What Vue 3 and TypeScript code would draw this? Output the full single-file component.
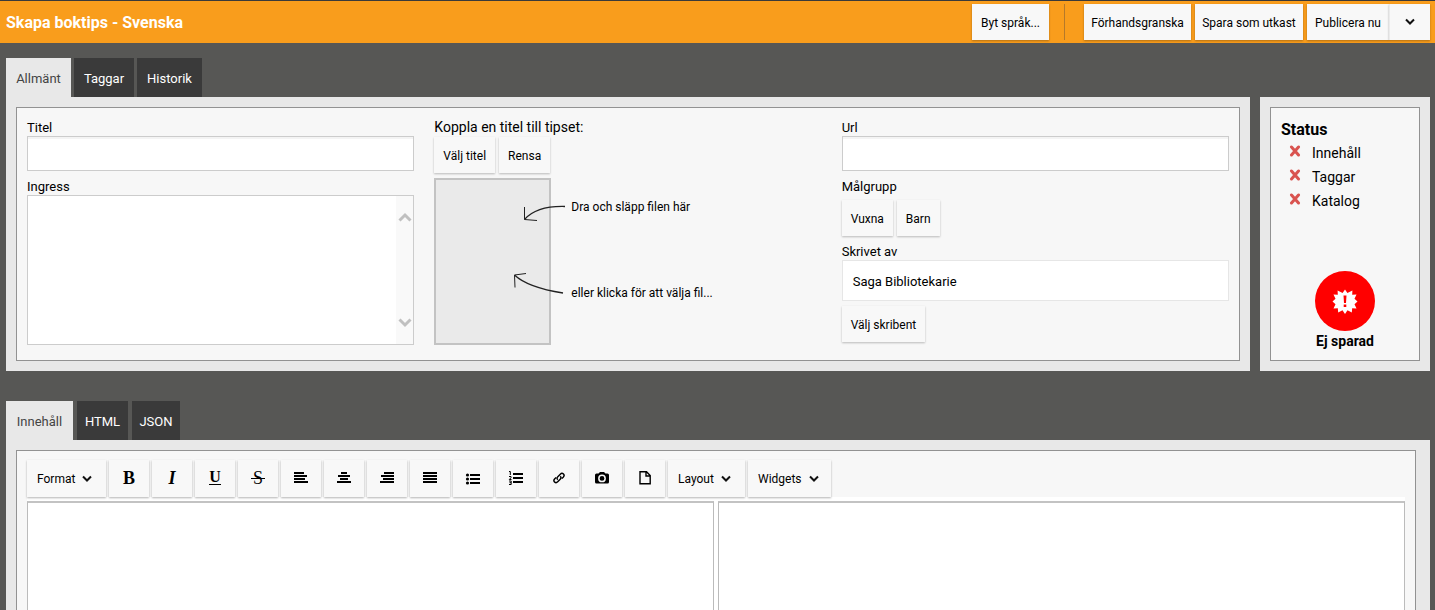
<script setup lang="ts">
import { ref } from 'vue'

type Rect = [number, number, number, number]
interface Tool {
  label: string
  glyph?: string
  cls?: string
  rects?: Rect[]
  icon?: string
}

const title = ref('')
const ingress = ref('')
const url = ref('')
const topTabs = ['Allmänt', 'Taggar', 'Historik']
const bottomTabs = ['Innehåll', 'HTML', 'JSON']
const activeTop = ref('Allmänt')
const activeBottom = ref('Innehåll')
const checks = ['Innehåll', 'Taggar', 'Katalog']

const tools: Tool[] = [
  { label: 'Fet', glyph: 'B', cls: 'bold' },
  { label: 'Kursiv', glyph: 'I', cls: 'italic' },
  { label: 'Understruken', glyph: 'U', cls: 'under' },
  { label: 'Genomstruken', glyph: 'S', cls: 'strike' },
  { label: 'Vänsterställ', rects: [[1, 2, 10, 2], [1, 5, 13, 2], [1, 8, 11, 2], [1, 11, 14, 2]] },
  { label: 'Centrera', rects: [[5, 2, 6, 2], [2, 5, 12, 2], [4, 8, 8, 2], [1, 11, 14, 2]] },
  { label: 'Högerställ', rects: [[5, 2, 10, 2], [2, 5, 13, 2], [4, 8, 11, 2], [1, 11, 14, 2]] },
  { label: 'Marginaljustera', rects: [[1, 2, 14, 2], [1, 5, 14, 2], [1, 8, 14, 2], [1, 11, 14, 2]] },
  { label: 'Punktlista', icon: 'bullets', rects: [[5, 4, 10, 2], [5, 8, 10, 2], [5, 12, 10, 2]] },
  { label: 'Numrerad lista', icon: 'numbers', rects: [[5, 3, 10, 2], [5, 7, 10, 2], [5, 11, 10, 2]] },
  { label: 'Länk', icon: 'link' },
  { label: 'Bild', icon: 'camera' },
  { label: 'Dokument', icon: 'file' },
]
</script>

<template>
  <div class="page">
    <header class="topbar">
      <h1>Skapa boktips - Svenska</h1>
      <div class="actions">
        <button type="button" class="btn">Byt språk...</button>
        <span class="divider"></span>
        <button type="button" class="btn">Förhandsgranska</button>
        <button type="button" class="btn">Spara som utkast</button>
        <div class="split">
          <button type="button" class="btn">Publicera nu</button>
          <button type="button" class="btn more" aria-label="Fler val">
            <svg class="chev" width="10" height="8" viewBox="0 0 10 8"><path d="M1 1.500 5 5.500 9 1.500" /></svg>
          </button>
        </div>
      </div>
    </header>

    <nav class="tabs first" aria-label="Egenskaper">
      <button v-for="t in topTabs" :key="t" type="button" class="tab" :class="{ active: t === activeTop }" @click="activeTop = t">{{ t }}</button>
    </nav>

    <div class="row">
      <section class="panel main">
        <div class="inner columns">
          <div class="col">
            <label for="titel">Titel</label>
            <input id="titel" v-model="title" type="text" class="field" />
            <label for="ingress" class="next">Ingress</label>
            <div class="area">
              <textarea id="ingress" v-model="ingress"></textarea>
              <div class="scroll" aria-hidden="true">
                <svg width="14" height="10" viewBox="0 0 14 10"><path d="M1.500 8.500 7 3 12.500 8.500" /></svg>
                <svg width="14" height="10" viewBox="0 0 14 10"><path d="M1.500 1.500 7 7 12.500 1.500" /></svg>
              </div>
            </div>
          </div>

          <div class="col">
            <span class="caption wide-caption">Koppla en titel till tipset:</span>
            <div class="buttons">
              <button type="button" class="btn">Välj titel</button>
              <button type="button" class="btn">Rensa</button>
            </div>
            <div class="drop">
              <button type="button" class="dropzone" aria-label="Välj fil"></button>
              <div class="hints">
                <p>Dra och släpp filen här</p>
                <p>eller klicka för att välja fil...</p>
              </div>
              <svg class="arrows" width="56" height="90" viewBox="0 0 56 90" aria-hidden="true">
                <path d="M54 5.500C36 5 22 9 13.500 18.500" />
                <path d="M13.500 6V18.500L26 19.500" class="thin" />
                <path d="M52 92C33 89 14 84 3.500 74" />
                <path d="M4 86.500 3.500 74 15 72.500" class="thin" />
              </svg>
            </div>
          </div>

          <div class="col">
            <label for="url">Url</label>
            <input id="url" v-model="url" type="text" class="field" />
            <span class="caption next">Målgrupp</span>
            <div class="buttons spaced">
              <button type="button" class="btn">Vuxna</button>
              <button type="button" class="btn">Barn</button>
            </div>
            <span class="caption next">Skrivet av</span>
            <div class="author">Saga Bibliotekarie</div>
            <div class="buttons spaced">
              <button type="button" class="btn">Välj skribent</button>
            </div>
          </div>
        </div>
      </section>

      <aside class="panel status">
        <div class="inner">
          <h2>Status</h2>
          <ul>
            <li v-for="c in checks" :key="c">
              <svg width="12" height="12" viewBox="0 0 12 12"><path d="M2.500 2 9.500 10M9.500 2 2.500 10" /></svg>
              <span>{{ c }}</span>
            </li>
          </ul>
          <div class="saved">
            <svg width="60" height="60" viewBox="0 0 60 60">
              <circle cx="30" cy="30" r="30" fill="#ff0000" />
              <path fill="#fff" d="M30 18.500 32.400 22 37.400 19.500 37.200 23.800 41.500 23.500 39.500 27.700 42.500 30.500 39.500 33.200 41.500 37.500 37.200 37.300 36.800 41.500 32.500 39.200 30 43 27.500 39.200 23.200 41.500 22.800 37.300 18.500 37.500 20.500 33.200 17.500 30.500 20.500 27.700 18.500 23.500 22.800 23.800 22.600 19.500 27.600 22Z" />
              <path fill="#ff0000" d="M28.500 24.500h3l-.5 7.500h-2zM28.700 33.500h2.600v2.500h-2.600z" />
            </svg>
            <strong>Ej sparad</strong>
          </div>
        </div>
      </aside>
    </div>

    <nav class="tabs second" aria-label="Innehåll">
      <button v-for="t in bottomTabs" :key="t" type="button" class="tab" :class="{ active: t === activeBottom }" @click="activeBottom = t">{{ t }}</button>
    </nav>

    <section class="panel editor">
      <div class="inner">
        <div class="toolbar">
          <button type="button" class="btn menu">Format
            <svg class="chev" width="10" height="8" viewBox="0 0 10 8"><path d="M1 1.500 5 5.500 9 1.500" /></svg>
          </button>
          <button v-for="t in tools" :key="t.label" type="button" class="btn tool" :aria-label="t.label">
            <span v-if="t.glyph" class="glyph" :class="t.cls">{{ t.glyph }}</span>
            <svg v-else width="16" height="16" viewBox="0 0 16 16">
              <rect v-for="(r, i) in t.rects" :key="i" :x="r[0]" :y="r[1]" :width="r[2]" :height="r[3]" />
              <g v-if="t.icon === 'bullets'">
                <circle cx="2.500" cy="5" r="1.600" /><circle cx="2.500" cy="9" r="1.600" /><circle cx="2.500" cy="13" r="1.600" />
              </g>
              <path v-if="t.icon === 'numbers'" class="line" d="M1 1.500h1.300v3.500M1 6.500h2v1.200L1.300 9.500H3.500M1 11h2.200v3.500H1M1.500 12.700h1.500" />
              <path v-if="t.icon === 'link'" class="line wide" d="M6.700 9.700C5.700 8.700 5.900 7.600 6.800 6.700L9.300 4.200C10.300 3.200 11.600 3.200 12.500 4.100S13.200 6.300 12.200 7.300L10.900 8.500M9.300 6.300C10.300 7.300 10.100 8.400 9.200 9.300L6.700 11.800C5.700 12.800 4.400 12.800 3.500 11.900S2.800 9.700 3.800 8.700L5.100 7.500" />
              <path v-if="t.icon === 'camera'" fill-rule="evenodd" d="M1 5Q1 3.500 2.500 3.500H4.500L6 2H10L11.500 3.500H13.500Q15 3.500 15 5V12Q15 13.500 13.500 13.500H2.500Q1 13.500 1 12ZM8 4.500A3.900 3.900 0 1 0 8 12.300A3.900 3.900 0 1 0 8 4.500ZM8 6A2.400 2.400 0 1 1 8 10.800A2.400 2.400 0 1 1 8 6Z" />
              <path v-if="t.icon === 'file'" class="line wide" d="M3 1.700H9.500L13.200 5.500V13.700H3ZM9 2V6H13" />
            </svg>
          </button>
          <button type="button" class="btn menu">Layout
            <svg class="chev" width="10" height="8" viewBox="0 0 10 8"><path d="M1 1.500 5 5.500 9 1.500" /></svg>
          </button>
          <button type="button" class="btn menu">Widgets
            <svg class="chev" width="10" height="8" viewBox="0 0 10 8"><path d="M1 1.500 5 5.500 9 1.500" /></svg>
          </button>
        </div>
        <div class="panes">
          <textarea aria-label="Vänster spalt"></textarea>
          <textarea aria-label="Höger spalt"></textarea>
        </div>
      </div>
    </section>
  </div>
</template>

<style>
body {
  background: #575755;
  overflow: hidden;
}
</style>

<style scoped>
.page {
  display: flex;
  flex-direction: column;
  height: 100vh;
  font-family: Roboto, "Liberation Sans", sans-serif;
  font-size: 13px;
  color: #000;
}
* {
  box-sizing: border-box;
}
button,
input,
textarea {
  font: inherit;
  color: inherit;
  margin: 0;
  border: 0;
  border-radius: 0;
  resize: none;
  outline: 0;
}
h1,
h2,
p,
ul {
  margin: 0;
  padding: 0;
}
.topbar {
  flex: none;
  display: flex;
  align-items: center;
  justify-content: space-between;
  height: 43px;
  padding: 0 5px 0 6px;
  border-top: 1px solid #3a3a3a;
  background: #f99d1c;
}
h1 {
  padding-top: 2px;
  font-size: 16px;
  font-weight: 700;
  line-height: 20px;
  color: #fff;
}
.actions {
  display: grid;
  grid-template-columns: 77px auto 107px 108px auto;
  gap: 4px;
}
.divider {
  width: 1px;
  margin: 0 15px 0 11px;
  background: #b5792a;
}
.split {
  display: grid;
  grid-template-columns: 82px 41px;
}
.btn {
  height: 36px;
  padding: 1px 9px 0;
  background: #f8f8f8;
  font-size: 12px;
  line-height: 16px;
  white-space: nowrap;
  box-shadow: 0 1px 2px rgba(0, 0, 0, 0.3);
}
.actions .btn {
  padding: 2px 0 0;
}
.split .more {
  padding: 0;
  border-left: 1px solid #ebebeb;
}
.chev {
  fill: none;
  stroke: #111;
  stroke-width: 2;
}
.tabs {
  flex: none;
  display: grid;
  gap: 3px;
  padding-left: 6px;
}
.tabs.first {
  grid-template-columns: 65px 60px 65px;
  margin-top: 15px;
}
.tabs.second {
  grid-template-columns: 67px 51px 48px;
  margin-top: 30px;
  gap: 4px;
}
.tab {
  height: 39px;
  padding: 2px 0 0;
  background: #3a3a3a;
  color: #fff;
}
.tab.active {
  background: #e8e8e8;
  color: #444;
}
.row {
  flex: none;
  display: flex;
  gap: 10px;
  padding: 0 5px 0 6px;
}
.panel {
  padding: 10px;
  background: #e8e8e8;
}
.inner {
  border: 1px solid #929292;
  background: #f7f7f7;
  padding: 10px;
}
.main {
  flex: 1;
}
.columns {
  display: grid;
  grid-template-columns: repeat(3, 1fr);
  gap: 20px;
  padding: 11px 10px 15px;
}
.col {
  display: flex;
  flex-direction: column;
}
label,
.caption {
  line-height: 17px;
}
.wide-caption {
  font-size: 14px;
}
.next {
  margin-top: 7px;
}
.field {
  height: 35px;
  padding: 0 10px;
  border: 1px solid #ccc;
  background: #fff;
  box-shadow: inset 0 2px 0 #f4f4f4;
}
.area {
  display: flex;
  height: 150px;
  border: 1px solid #ccc;
  background: #fff;
}
.area textarea {
  flex: 1;
  padding: 10px;
  background: #fff;
}
.scroll {
  display: flex;
  flex-direction: column;
  justify-content: space-between;
  align-items: center;
  width: 17px;
  padding: 16px 0;
  background: #f9f9f9;
}
.scroll svg {
  fill: none;
  stroke: #c0c0c0;
  stroke-width: 3;
}
.buttons {
  display: flex;
  gap: 4px;
  padding-top: 1px;
}
.buttons.spaced {
  padding-top: 5px;
}
.buttons .btn {
  box-shadow: 0 1px 2px rgba(0, 0, 0, 0.25);
}
.drop {
  position: relative;
  display: flex;
  margin-top: 5px;
}
.dropzone {
  width: 117px;
  height: 167px;
  border: 2px solid #c3c3c3;
  background: #eaeaea;
}
.hints {
  display: flex;
  flex-direction: column;
  gap: 70px;
  padding: 21px 0 0 20px;
  font-size: 12px;
  line-height: 16px;
}
.arrows {
  position: absolute;
  left: 77px;
  top: 23px;
  overflow: visible;
  fill: none;
  stroke: #222;
  stroke-width: 1.300;
}
.arrows .thin {
  stroke-width: 1;
}
.author {
  height: 41px;
  padding: 1px 10px 0;
  border: 1px solid #e6e6e6;
  background: #fff;
  line-height: 39px;
}
.status {
  display: flex;
  width: 170px;
}
.status .inner {
  flex: 1;
  display: flex;
  flex-direction: column;
  padding: 11px 10px 9px;
  font-size: 14px;
}
h2 {
  font-size: 16px;
  line-height: 22px;
}
ul {
  list-style: none;
}
li {
  display: flex;
  gap: 11px;
  padding-left: 8px;
  line-height: 24px;
}
li svg {
  margin-top: 4px;
  fill: none;
  stroke: #d9534f;
  stroke-width: 3;
  stroke-linecap: round;
}
.saved {
  display: flex;
  flex-direction: column;
  align-items: center;
  margin-top: auto;
  line-height: 20px;
}
.editor {
  flex: 1;
  display: flex;
  margin: 0 5px 0 6px;
  padding: 10px 14px 0 10px;
}
.editor .inner {
  flex: 1;
  display: flex;
  flex-direction: column;
  padding-top: 9px;
  padding-bottom: 0;
  border-bottom: 0;
}
.toolbar {
  position: relative;
  z-index: 1;
  display: grid;
  grid-template-columns: 79px repeat(13, 40px) 77px 83px;
  gap: 3px;
}
.toolbar .btn {
  height: 37px;
  box-shadow: 0 1px 2px rgba(0, 0, 0, 0.3);
}
.toolbar .menu {
  display: flex;
  align-items: center;
  gap: 7px;
  padding: 0 10px;
}
.toolbar .tool {
  display: flex;
  align-items: center;
  justify-content: center;
  padding: 0 0 2px;
}
.line {
  fill: none;
  stroke: #000;
  stroke-width: 1;
}
.wide {
  stroke-width: 1.400;
}
.glyph {
  position: relative;
  font-family: "Liberation Serif", serif;
  font-size: 18px;
  line-height: 18px;
}
.bold,
.italic {
  font-weight: 700;
}
.italic {
  font-style: italic;
}
.under {
  border-bottom: 1px solid #000;
  font-size: 16px;
  line-height: 14px;
  font-weight: 700;
}
.strike::after {
  content: "";
  position: absolute;
  left: -2px;
  right: -2px;
  top: 9px;
  height: 1px;
  background: #000;
}
.panes {
  flex: 1;
  display: grid;
  grid-template-columns: 1fr 1fr;
  gap: 4px;
  padding-top: 4px;
  background: #fff;
}
.panes textarea {
  height: 100%;
  padding: 10px;
  border: 1px solid #bbb;
  border-top: 2px solid #c3c3c3;
  border-bottom: 0;
  background: #fff;
}
</style>
